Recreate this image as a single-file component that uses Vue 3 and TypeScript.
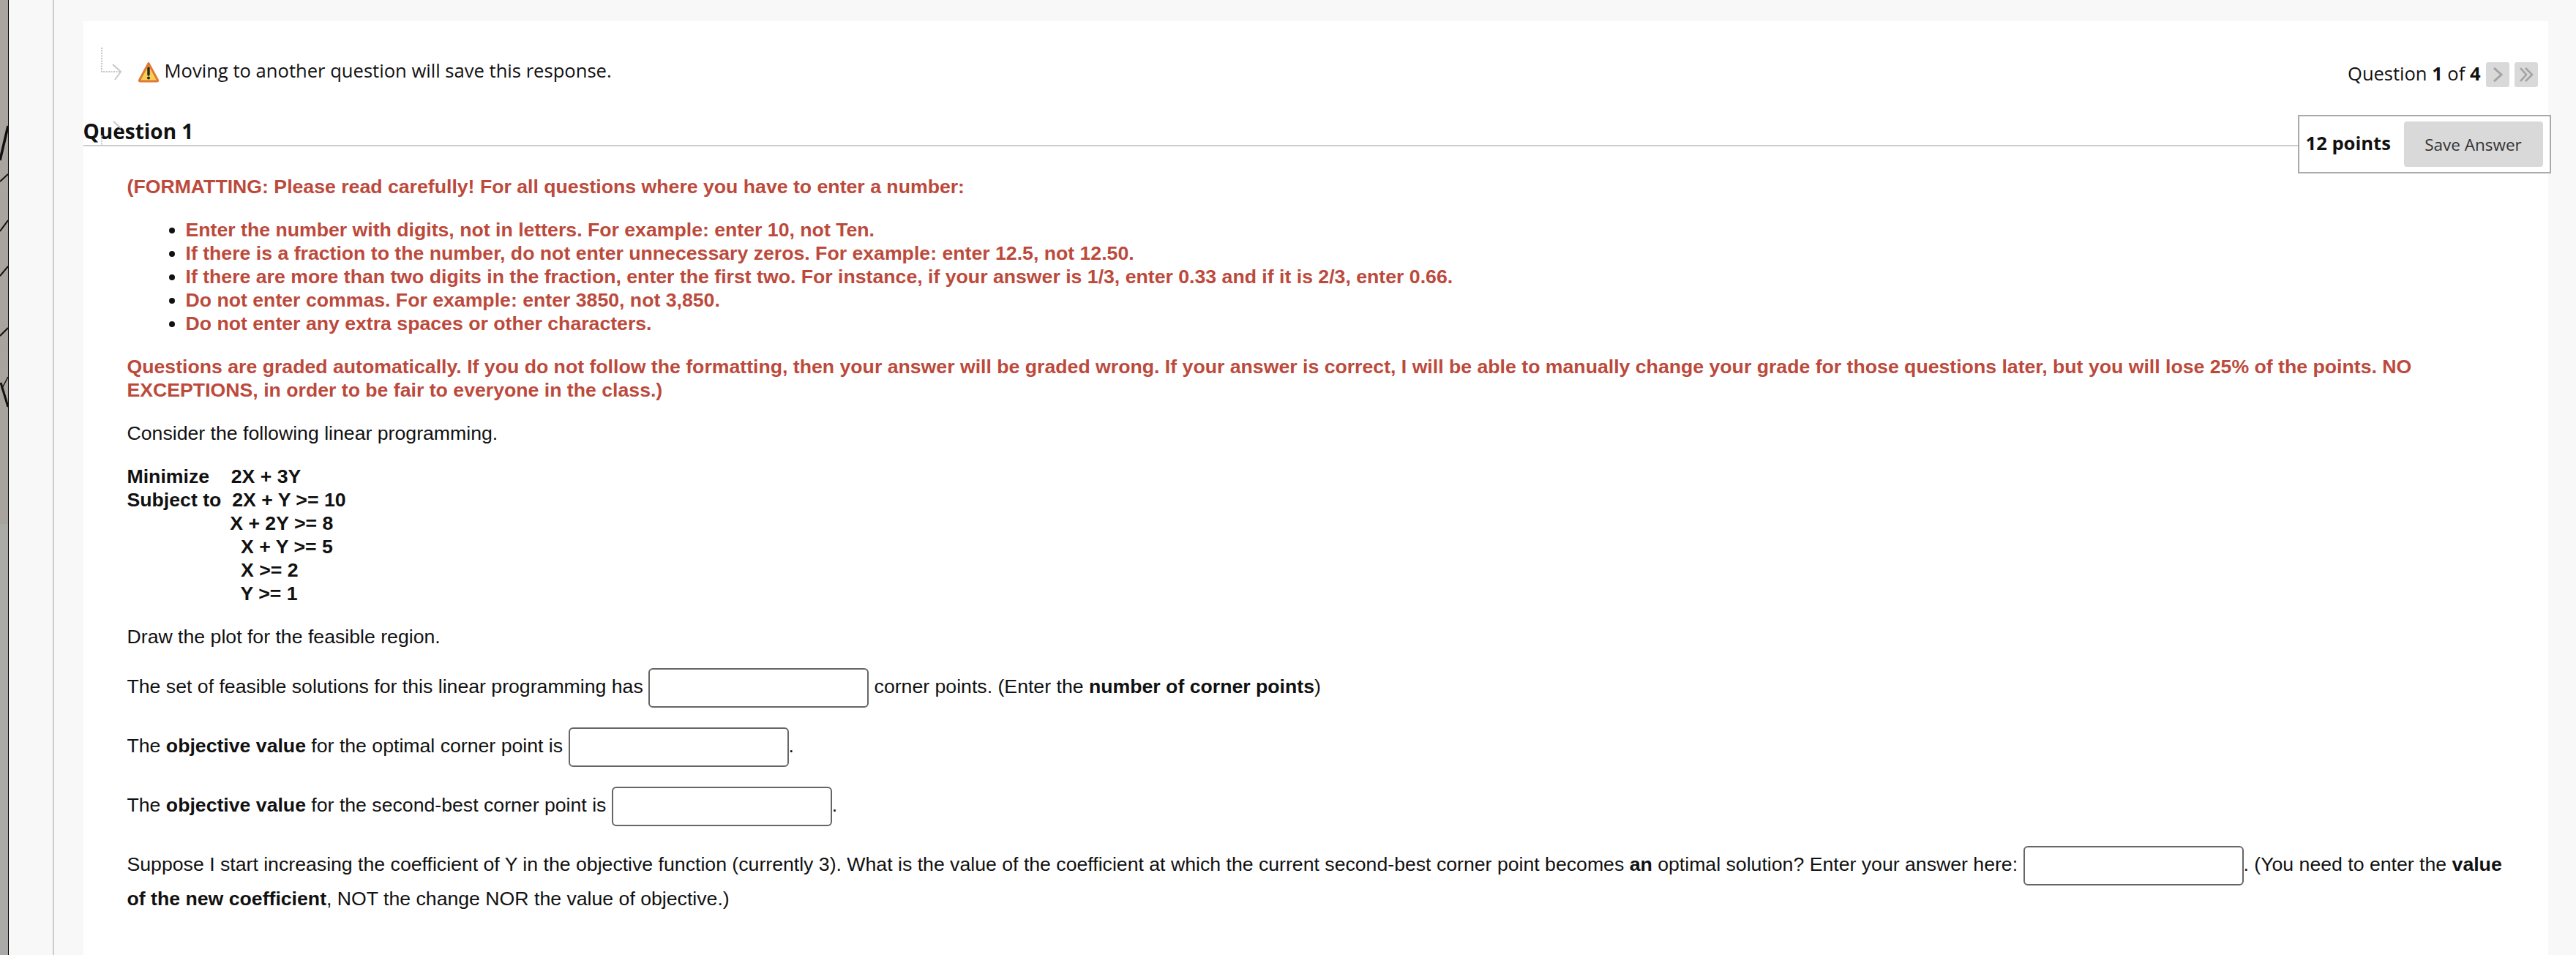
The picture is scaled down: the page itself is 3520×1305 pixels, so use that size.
<script setup lang="ts">
// strokes of the wallpaper that shows in the strip on the far left
const stripLines = [
  { d: 'M0 219 L11 172', w: 3.5 },
  { d: 'M0 248 L11 238', w: 2 },
  { d: 'M0 316 L11 301', w: 2 },
  { d: 'M0 377 L11 364', w: 2 },
  { d: 'M0 459 L11 448', w: 2 },
  { d: 'M1 523 L11 556', w: 3 },
  { d: 'M2 532 L11 515', w: 1.5 },
];
</script>

<template>
  <div class="page">
    <div class="strip">
      <svg width="11" height="1305" viewBox="0 0 11 1305">
        <path v-for="l in stripLines" :key="l.d" :d="l.d" stroke="#111" :stroke-width="l.w" fill="none" />
      </svg>
    </div>
    <div class="gutter"></div>
    <main class="panel">
      <header class="top-row">
        <div class="notice">
          <svg class="tree-arrow" width="30" height="46" viewBox="0 0 30 46" fill="none">
            <path d="M2 1 V34 H28" stroke="#c4c4c4" stroke-width="2" stroke-dasharray="2 1.5" />
            <path d="M17 24 L28 34 L20 45" stroke="#c9c9c9" stroke-width="2" />
          </svg>
          <svg class="warn" width="30" height="29" viewBox="0 0 30 29">
            <path d="M15 2.5 L27.5 25.5 Q28 27 26.5 27 H3.5 Q2 27 2.5 25.5 Z" fill="#f8cf55" stroke="#e07b33" stroke-width="3" stroke-linejoin="round" />
            <path d="M15 9 V18" stroke="#222" stroke-width="3.4" stroke-linecap="round" />
            <circle cx="15" cy="22.4" r="2" fill="#222" />
          </svg>
          <span class="notice-text">Moving to another question will save this response.</span>
        </div>
        <div class="pager">
          <span class="pager-text">Question <b>1</b> of <b>4</b></span>
          <span class="nav-btn">
            <svg width="14" height="20" viewBox="0 0 14 20" fill="none"><path d="M2 1 L12 10 L2 19" stroke="#a3a3a3" stroke-width="3" /></svg>
          </span>
          <span class="nav-btn">
            <svg width="20" height="20" viewBox="0 0 20 20" fill="none"><path d="M2 1 L10 10 L2 19 M9 1 L18 10 L9 19" stroke="#a3a3a3" stroke-width="2.6" /></svg>
          </span>
        </div>
      </header>

      <div class="question-row">
        <h2 class="question-title">
          Question 1
          <svg class="title-ghost" width="34" height="34" viewBox="0 0 34 34" fill="none">
            <path d="M2 20 V33" stroke="#c4c4c4" stroke-width="2" stroke-dasharray="2 1.5" />
            <path d="M18 1 L28 10" stroke="#c9c9c9" stroke-width="2" />
          </svg>
        </h2>
        <div class="points-box">
          <span class="points">12 points</span>
          <button class="save-btn" type="button">Save Answer</button>
        </div>
      </div>

      <section class="content">
        <p class="warn-text">(FORMATTING: Please read carefully! For all questions where you have to enter a number:</p>
        <ul>
          <li><span class="warn-text">Enter the number with digits, not in letters. For example: enter 10, not Ten.</span></li>
          <li><span class="warn-text">If there is a fraction to the number, do not enter unnecessary zeros. For example: enter 12.5, not 12.50.</span></li>
          <li><span class="warn-text">If there are more than two digits in the fraction, enter the first two. For instance, if your answer is 1/3, enter 0.33 and if it is 2/3, enter 0.66.</span></li>
          <li><span class="warn-text">Do not enter commas. For example: enter 3850, not 3,850.</span></li>
          <li><span class="warn-text">Do not enter any extra spaces or other characters.</span></li>
        </ul>
        <p class="warn-text">Questions are graded automatically. If you do not follow the formatting, then your answer will be graded wrong. If your answer is correct, I will be able to manually change your grade for those questions later, but you will lose 25% of the points. NO EXCEPTIONS, in order to be fair to everyone in the class.)</p>
        <p>Consider the following linear programming.</p>
        <pre class="formula">Minimize    2X + 3Y
Subject to  2X + Y &gt;= 10
                   X + 2Y &gt;= 8
                     X + Y &gt;= 5
                     X &gt;= 2
                     Y &gt;= 1</pre>
        <p>Draw the plot for the feasible region.</p>
        <p class="field-line">The set of feasible solutions for this linear programming has <input class="answer" type="text" /> corner points. (Enter the <b>number of corner points</b>)</p>
        <p class="field-line">The <b>objective value</b> for the optimal corner point is <input class="answer" type="text" />.</p>
        <p class="field-line">The <b>objective value</b> for the second-best corner point is <input class="answer" type="text" />.</p>
        <p class="field-line">Suppose I start increasing the coefficient of Y in the objective function (currently 3). What is the value of the coefficient at which the current second-best corner point becomes <b>an</b> optimal solution? Enter your answer here: <input class="answer" type="text" />. (You need to enter the <b>value of the new coefficient</b>, NOT the change NOR the value of objective.)</p>
      </section>
    </main>
  </div>
</template>

<style scoped>
.page {
  display: flex;
  width: 3520px;
  height: 1305px;
  overflow: hidden;
  background: #f8f8f8;
  color: #111;
}

.strip {
  flex: none;
  width: 11px;
  height: 1305px;
  border-right: 1.5px solid #000;
  background: linear-gradient(to bottom, #aaa59e 0, #a8a39c 716px, #aaaaa7 716px, #aaaaa8 100%);
}

.strip svg {
  display: block;
}

.gutter {
  flex: none;
  width: 59.5px;
  border-right: 2.5px solid #ccc;
}

.panel {
  flex: none;
  width: 3368px;
  margin: 29px 0 0 40px;
  background: #fff;
}

.top-row {
  display: flex;
  justify-content: space-between;
  align-items: flex-end;
  padding: 35px 14px 0 23px;
  font-family: "Open Sans", sans-serif;
}

.notice {
  display: flex;
  align-items: flex-start;
  padding-bottom: 6px;
}

.warn {
  margin: 20px 7px 0 21px;
}

.notice-text {
  margin-top: 15px;
  font-size: 25.6px;
  line-height: 36px;
}

.pager {
  display: flex;
  align-items: center;
  gap: 7px;
}

.pager-text {
  margin-bottom: 4px;
  font-size: 25.5px;
}

.nav-btn {
  display: flex;
  align-items: center;
  justify-content: center;
  width: 32px;
  height: 34px;
  border-radius: 3px;
  background: #d9d9d9;
}

.question-row {
  display: flex;
  align-items: flex-start;
  margin-top: 36px;
}

.question-title {
  position: relative;
  flex: 1;
  height: 43px;
  margin: 0;
  border-bottom: 2px solid #ccc;
  box-sizing: border-box;
  font-family: "Open Sans", sans-serif;
  font-size: 28px;
  font-weight: 700;
  line-height: 38px;
  padding-top: 3px;
}

.title-ghost {
  position: absolute;
  left: 23px;
  top: 8px;
}

.points-box {
  display: flex;
  align-items: center;
  justify-content: space-between;
  flex: none;
  box-sizing: border-box;
  width: 346px;
  height: 80px;
  margin-right: -4px;
  padding: 0 9px 0 9px;
  border: 2px solid #aaa;
  background: #fff;
  font-family: "Open Sans", sans-serif;
}

.points {
  font-size: 25.6px;
  font-weight: 700;
  margin-top: -4px;
}

.save-btn {
  width: 190px;
  height: 62px;
  border: 0;
  border-radius: 4px;
  background: #d9d9d9;
  color: #333;
  font-family: "Open Sans", sans-serif;
  font-size: 22.5px;
}

.content {
  padding: 0 40px 0 60px;
  margin-top: 2px;
  font-family: "Liberation Sans", Arial, sans-serif;
  font-size: 26.67px;
  line-height: 32px;
}

.content p {
  margin: 0 0 27px;
}

.content .field-line {
  margin-bottom: 25px;
}

.content ul {
  margin: 0 0 27px;
  padding: 0 0 0 80px;
}

.warn-text {
  color: #bc4a3c;
  font-weight: 700;
}

.formula {
  margin: 0 0 27px;
  font-family: inherit;
  font-weight: 700;
}

.answer {
  box-sizing: border-box;
  width: 301px;
  height: 54px;
  margin-bottom: 2px;
  padding: 0 8px;
  border: 2px solid #666;
  border-radius: 6px;
  background: #fff;
  font-size: 26.67px;
  vertical-align: -2px;
}
</style>

<style>
body {
  margin: 0;
}
</style>
